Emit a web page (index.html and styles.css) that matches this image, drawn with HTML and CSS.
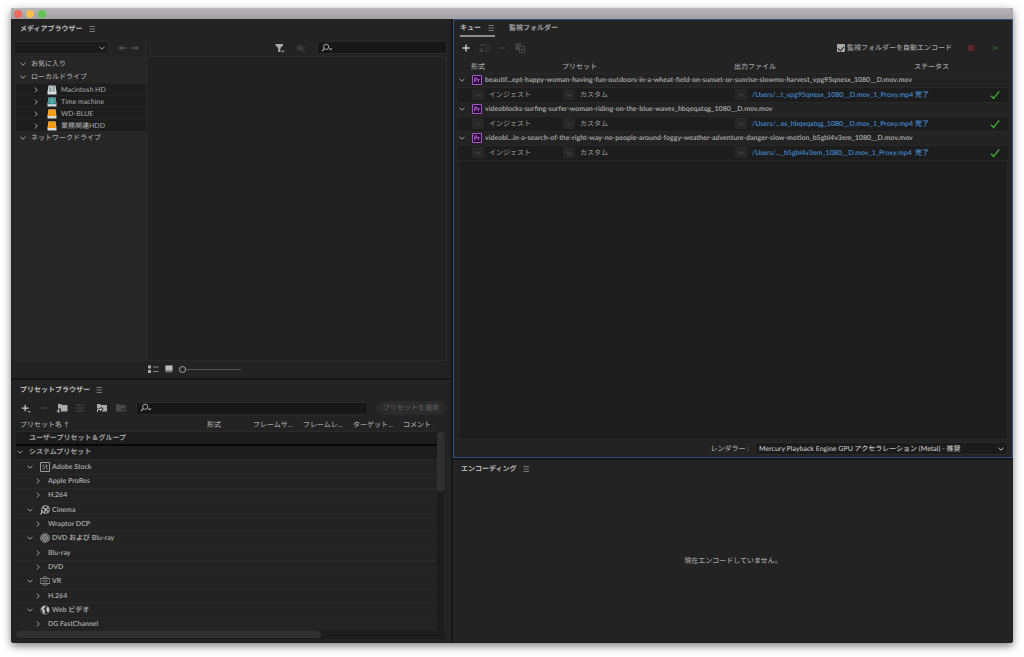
FILE: index.html
```html
<!DOCTYPE html>
<html lang="ja">
<head>
<meta charset="utf-8">
<title>Media Encoder</title>
<link rel="stylesheet" href="styles.css">
</head>
<body>
<svg class="defs" aria-hidden="true">
  <symbol id="down" viewBox="0 0 8 8"><path d="M1.5 2.8 4 5.2 6.5 2.8" fill="none" stroke="currentColor"/></symbol>
  <symbol id="right" viewBox="0 0 8 8"><path d="M2.8 1.5 5.2 4 2.8 6.5" fill="none" stroke="currentColor"/></symbol>
  <symbol id="menu" viewBox="0 0 8 8"><path d="M1.500 1.500h5.500M1.500 4h5.500M1.500 6.500h5.500" stroke="#8c8c8c" stroke-width=".8"/></symbol>
  <symbol id="search" viewBox="0 0 12 10"><circle cx="5.2" cy="3.8" r="2.6" fill="none" stroke="currentColor"/><path d="M3.3 5.7 1 8" stroke="currentColor" stroke-width="1.1"/><path d="M7.6 5.6h4L9.6 7.6z" fill="currentColor"/></symbol>
  <symbol id="plus" viewBox="0 0 10 10"><path d="M5 1.5v7M1.5 5h7" stroke="currentColor" stroke-width="1.4"/></symbol>
  <symbol id="minus" viewBox="0 0 10 10"><path d="M1.5 5h7" stroke="currentColor" stroke-width="1.2"/></symbol>
  <symbol id="disk" viewBox="0 0 10 10"><path d="M1.500.5h7L9.500 7v2.500h-9V7z" fill="#d9dcdc"/></symbol>
  <symbol id="disk-orange" viewBox="0 0 10 10"><path d="M1.500.5h7L9.500 7v2.500h-9V7z" fill="#d9dcdc"/><path d="M1.500.5h7l.5 6.500H1z" fill="#f39c12"/></symbol>
  <symbol id="pr" viewBox="0 0 10 10"><path d="M.5.5h9v9h-9z" fill="#2a0634" stroke="#a259c4"/><path d="M2.8 7.4V2.8h1.1c1.8 0 1.8 2.4 0 2.4H2.8M6.3 7.4V4.2M6.3 5.4c.2-.8.8-1.1 1.4-1" fill="none" stroke="#c07be0" stroke-width=".9"/></symbol>
  <symbol id="check" viewBox="0 0 10 10"><path d="M1 5.8 3.6 8.4 9.2 1.4" fill="none" stroke="#3fa535" stroke-width="1.5"/></symbol>
  <symbol id="sliders" viewBox="0 0 10 10"><path d="M.5 2h3m2 0h4M.5 5h5m2 0h2M.5 8h2m2 0h5M4.5 1v2M6.5 4v2M3.5 7v2" stroke="currentColor"/></symbol>
</svg>
<main class="window">
  <header class="titlebar"><i class="light close"></i><i class="light minimise"></i><i class="light zoom"></i></header>
  <div class="workspace">
    <div class="column">
      <section class="panel media">
        <h2 class="title">メディアブラウザー <button class="icon-button" aria-label="パネルメニュー"><svg class="i8"><use href="#menu"/></svg></button></h2>
        <div class="media-tools">
          <div class="location">
            <label class="drop"><select aria-label="場所"><option></option></select><svg class="i8"><use href="#down"/></svg></label>
            <button class="icon-button dim" aria-label="戻る"><svg class="i8" viewBox="0 0 8 8"><path d="M0 4l3.5-3v2H8v2H3.500v2z" fill="currentColor"/></svg></button>
            <button class="icon-button dim" aria-label="進む"><svg class="i8" viewBox="0 0 8 8"><path d="M8 4L4.500 1v2H0v2h4.500v2z" fill="currentColor"/></svg></button>
          </div>
          <div class="filters">
            <button class="icon-button" aria-label="フィルター"><svg class="i10" viewBox="0 0 10 10"><path d="M.5 1h7.5v1.500L5.400 5v4H3.200V5L.5 2.500zM6 7.800h3.500L7.800 9.600z" fill="#aaa"/></svg></button>
            <button class="icon-button dim" aria-label="表示"><svg class="i10" viewBox="0 0 10 10"><path d="M.5 5Q4.500 0 8.500 5 4.500 9.500.5 5z" fill="none" stroke="currentColor"/><circle cx="4.500" cy="4.900" r="1.500" fill="currentColor"/><path d="M6.800 8h3L8.300 9.700z" fill="currentColor"/></svg></button>
            <label class="search"><svg class="i12"><use href="#search"/></svg><input type="text" aria-label="メディアを検索"></label>
          </div>
        </div>
        <div class="media-body">
          <ul class="tree">
            <li class="folder"><svg class="i8"><use href="#down"/></svg>お気に入り</li>
            <li class="folder"><svg class="i8"><use href="#down"/></svg>ローカルドライブ</li>
            <li>
              <ul class="drives">
                <li><svg class="i8"><use href="#right"/></svg><svg class="i10" viewBox="0 0 10 10"><use href="#disk"/><path d="M2.200 1.200h5.600l.4 5.300H1.800z" fill="#8b999e"/><path d="M3.500 2h2v1.200h-2zM4 4.300h3v1H4z" fill="#e4eaec"/></svg>Macintosh HD</li>
                <li><svg class="i8"><use href="#right"/></svg><svg class="i10" viewBox="0 0 10 10"><use href="#disk"/><path d="M1.500.5h7l.5 6.700H1z" fill="#2f8a88"/><circle cx="5" cy="4" r="2" fill="none" stroke="#9ad4d0" stroke-width=".7"/><path d="M5 2.700V4l1 .7" fill="none" stroke="#9ad4d0" stroke-width=".6"/></svg>Time machine</li>
                <li><svg class="i8"><use href="#right"/></svg><svg class="i10"><use href="#disk-orange"/></svg>WD-BLUE</li>
                <li><svg class="i8"><use href="#right"/></svg><svg class="i10"><use href="#disk-orange"/></svg>業務関連HDD</li>
              </ul>
            </li>
            <li class="folder"><svg class="i8"><use href="#down"/></svg>ネットワークドライブ</li>
          </ul>
          <div class="contents"></div>
        </div>
        <div class="view-tools">
          <button class="icon-button" aria-label="リスト表示"><svg class="i12" viewBox="0 0 12 10"><path d="M1 1.500h3v3H1zM1 6h3v3H1z" fill="#aaa"/><path d="M6 3h5.500M6 7.500h5.500" stroke="#888"/></svg></button>
          <button class="icon-button" aria-label="サムネール表示"><svg class="i10" viewBox="0 0 10 10"><path d="M1.500 1.500h7v7h-7z" fill="#666"/><path d="M1.500 1.500h7v5h-7z" fill="#bbb"/></svg></button>
          <input class="slider" type="range" min="0" max="100" value="0" aria-label="サムネールサイズ">
        </div>
      </section>

      <section class="panel presets">
        <h2 class="title">プリセットブラウザー <button class="icon-button" aria-label="パネルメニュー"><svg class="i8"><use href="#menu"/></svg></button></h2>
        <div class="preset-tools">
          <div class="preset-actions">
            <button class="icon-button bright" aria-label="新規プリセット"><svg class="i12" viewBox="0 0 12 12"><path d="M5 2v8M1 6h8" stroke="currentColor" stroke-width="1.500"/><path d="M8 9.800h3.500L9.800 11.600z" fill="currentColor"/></svg></button>
            <button class="icon-button dim" aria-label="削除"><svg class="i10"><use href="#minus"/></svg></button>
            <button class="icon-button" aria-label="新規グループ"><svg class="i12" viewBox="0 0 12 10"><path d="M2 1h3l1 1h5.500v6.500H5V5.500H2z" fill="#aaa"/><path d="M2.500 6v4M.5 8h4" stroke="#aaa"/></svg></button>
            <button class="icon-button dim" aria-label="プリセット設定"><svg class="i10"><use href="#sliders"/></svg></button>
            <button class="icon-button wide" aria-label="読み込み"><svg class="i12" viewBox="0 0 12 10"><path d="M1 1h3l1 1h6v6.500H5.500L7.500 6 5 3.500 3.500 5.500H1z" fill="#aaa"/><path d="M1.500 9V6.500H5M4 4.500 6 6.200 4 8" fill="none" stroke="#bbb"/></svg></button>
            <button class="icon-button dim" aria-label="書き出し"><svg class="i12" viewBox="0 0 12 10"><path d="M1 1h3l1 1h5.500v3.500H6v3H1z" fill="currentColor"/><path d="M6.500 9V7.500h4M9 5.500l2 2-2 2" fill="none" stroke="currentColor"/></svg></button>
          </div>
          <label class="search"><svg class="i12"><use href="#search"/></svg><input type="text" aria-label="プリセットを検索"></label>
          <button class="apply" disabled>プリセットを適用</button>
        </div>
        <div class="preset-list">
          <table class="preset-table">
            <colgroup><col class="c-name"><col class="c-format"><col class="c-meta"><col class="c-meta"><col class="c-meta"><col class="c-comment"></colgroup>
            <thead><tr><th>プリセット名 ↑</th><th>形式</th><th>フレームサ...</th><th>フレームレ...</th><th>ターゲット...</th><th>コメント</th></tr></thead>
            <tbody>
              <tr class="user"><td colspan="6"><div class="node top"><span class="i8"></span>ユーザープリセット＆グループ</div></td></tr>
              <tr class="system"><td colspan="6"><div class="node top"><svg class="i8"><use href="#down"/></svg>システムプリセット</div></td></tr>
              <tr><td colspan="6"><div class="node group"><svg class="i8"><use href="#down"/></svg><svg class="i10" viewBox="0 0 10 10"><path d="M.5.5h9v9h-9z" fill="none" stroke="#999"/><path d="M4.600 3.200C3.500 2.400 2.200 3.300 3 4.200s1.800.7 1.500 1.900-1.500 1-2.100.6M6.500 2.500v3.800q0 .8 1 .7M5.600 4.200h2" fill="none" stroke="#aaa" stroke-width=".7"/></svg>Adobe Stock</div></td></tr>
              <tr><td colspan="6"><div class="node leaf"><svg class="i8"><use href="#right"/></svg>Apple ProRes</div></td></tr>
              <tr><td colspan="6"><div class="node leaf"><svg class="i8"><use href="#right"/></svg>H.264</div></td></tr>
              <tr><td colspan="6"><div class="node group"><svg class="i8"><use href="#down"/></svg><svg class="i10" viewBox="0 0 10 10"><circle cx="5.500" cy="4.500" r="3.900" fill="none" stroke="#bbb"/><path d="M.3 9.500Q2 8.500 2 5M5.500 4.500 3 2.500M5.500 4.500l2.800-2M5.500 4.500 4 8M5.500 4.500l3 2.200" fill="none" stroke="#bbb" stroke-width="1.200"/></svg>Cinema</div></td></tr>
              <tr><td colspan="6"><div class="node leaf"><svg class="i8"><use href="#right"/></svg>Wraptor DCP</div></td></tr>
              <tr><td colspan="6"><div class="node group"><svg class="i8"><use href="#down"/></svg><svg class="i10" viewBox="0 0 10 10"><circle cx="5" cy="5" r="4.300" fill="#4d4d4d" stroke="#999" stroke-width=".9"/><circle cx="5" cy="5" r="2.500" fill="none" stroke="#aaa" stroke-width=".9"/><circle cx="5" cy="5" r=".9" fill="#aaa"/></svg>DVD および Blu-ray</div></td></tr>
              <tr><td colspan="6"><div class="node leaf"><svg class="i8"><use href="#right"/></svg>Blu-ray</div></td></tr>
              <tr><td colspan="6"><div class="node leaf"><svg class="i8"><use href="#right"/></svg>DVD</div></td></tr>
              <tr><td colspan="6"><div class="node group"><svg class="i8"><use href="#down"/></svg><svg class="i10" viewBox="0 0 10 10"><path d="M.2 2.500h9.600v5H.2zM2 2.500Q5-1.500 8 2.500M2 7.500q3 4 6 0M2 5h2M6 5h2M5 3.500v3" fill="none" stroke="#999" stroke-width=".8"/></svg>VR</div></td></tr>
              <tr><td colspan="6"><div class="node leaf"><svg class="i8"><use href="#right"/></svg>H.264</div></td></tr>
              <tr><td colspan="6"><div class="node group"><svg class="i8"><use href="#down"/></svg><svg class="i10" viewBox="0 0 10 10"><circle cx="5" cy="5" r="4.300" fill="#2b2b2b" stroke="#999" stroke-width=".6"/><path d="M1 3.500 3.500.9l2 .4-.7 1.500L3.500 4l1.700 1.700-.9 3.300L3 8.500 2.500 6zM6.500 2.500 8.500 2l.8 3-.8 2.500-1.300-.8-.9-2z" fill="#c4c4c4"/></svg>Web ビデオ</div></td></tr>
              <tr><td colspan="6"><div class="node leaf"><svg class="i8"><use href="#right"/></svg>DG FastChannel</div></td></tr>
            </tbody>
          </table>
          <div class="vbar"><div class="vthumb"></div></div>
          <div class="hbar"><div class="hthumb"></div></div>
        </div>
      </section>
    </div>

    <div class="column">
      <section class="panel queue">
        <nav class="tabs">
          <button class="tab active">キュー <svg class="i8"><use href="#menu"/></svg></button>
          <button class="tab">監視フォルダー</button>
        </nav>
        <div class="queue-tools">
          <button class="icon-button bright" aria-label="ソースを追加"><svg class="i10"><use href="#plus"/></svg></button>
          <button class="icon-button dim" aria-label="出力を追加"><svg class="i10" viewBox="0 0 10 10"><path d="M1 2h3m1.500 0H7m1 0h2M4.500 1v2M5 5h1m1 0h3M6 8h4M2.500 5v4.500M.2 7.500h4.500" stroke="currentColor"/></svg></button>
          <button class="icon-button dim" aria-label="削除"><svg class="i10"><use href="#minus"/></svg></button>
          <button class="icon-button dim" aria-label="複製"><svg class="i10" viewBox="0 0 10 10"><path d="M.5.500h5.500v2H3.500v4.500h-3z" fill="currentColor"/><path d="M4.500 3.500h5v6h-5zM7 5v3M5.500 6.500h3" fill="none" stroke="currentColor"/></svg></button>
          <label class="auto"><input type="checkbox" checked>監視フォルダーを自動エンコード</label>
          <button class="icon-button stop" aria-label="停止"><svg class="i8" viewBox="0 0 8 8"><path d="M1 1h6v6H1z" fill="#5b2626"/></svg></button>
          <button class="icon-button" aria-label="開始"><svg class="i8" viewBox="0 0 8 8"><path d="M1 1l6 3-6 3z" fill="#28472a"/></svg></button>
        </div>
        <div class="queue-list">
          <table class="queue-table">
            <colgroup><col class="q-toggle"><col class="q-format"><col class="q-preset"><col class="q-output"><col class="q-status"></colgroup>
            <thead><tr><th></th><th>形式</th><th>プリセット</th><th>出力ファイル</th><th>ステータス</th></tr></thead>
            <tbody>
              <tr class="source"><td><svg class="i8"><use href="#down"/></svg></td><td colspan="4"><div class="cell"><svg class="i10"><use href="#pr"/></svg>beautif...ept-happy-woman-having-fun-outdoors-in-a-wheat-field-on-sunset-or-sunrise-slowmo-harvest_vpg95qnesx_1080__D.mov.mov</div></td></tr>
              <tr class="job"><td></td><td><div class="cell"><button class="pick" aria-label="形式を選択"><svg class="i8"><use href="#down"/></svg></button>インジェスト</div></td><td><div class="cell"><button class="pick" aria-label="プリセットを選択"><svg class="i8"><use href="#down"/></svg></button>カスタム</div></td><td><div class="cell"><button class="pick" aria-label="出力先を選択"><svg class="i8"><use href="#down"/></svg></button><a href="#">/Users/...t_vpg95qnesx_1080__D.mov_1_Proxy.mp4</a></div></td><td><div class="cell done"><a href="#">完了</a><svg class="i10"><use href="#check"/></svg></div></td></tr>
              <tr class="source"><td><svg class="i8"><use href="#down"/></svg></td><td colspan="4"><div class="cell"><svg class="i10"><use href="#pr"/></svg>videoblocks-surfing-surfer-woman-riding-on-the-blue-waves_hbqeqatqg_1080__D.mov.mov</div></td></tr>
              <tr class="job"><td></td><td><div class="cell"><button class="pick" aria-label="形式を選択"><svg class="i8"><use href="#down"/></svg></button>インジェスト</div></td><td><div class="cell"><button class="pick" aria-label="プリセットを選択"><svg class="i8"><use href="#down"/></svg></button>カスタム</div></td><td><div class="cell"><button class="pick" aria-label="出力先を選択"><svg class="i8"><use href="#down"/></svg></button><a href="#">/Users/...es_hbqeqatqg_1080__D.mov_1_Proxy.mp4</a></div></td><td><div class="cell done"><a href="#">完了</a><svg class="i10"><use href="#check"/></svg></div></td></tr>
              <tr class="source"><td><svg class="i8"><use href="#down"/></svg></td><td colspan="4"><div class="cell"><svg class="i10"><use href="#pr"/></svg>videobl...in-a-search-of-the-right-way-no-people-around-foggy-weather-adventure-danger-slow-motion_b5gbl4v3em_1080__D.mov.mov</div></td></tr>
              <tr class="job"><td></td><td><div class="cell"><button class="pick" aria-label="形式を選択"><svg class="i8"><use href="#down"/></svg></button>インジェスト</div></td><td><div class="cell"><button class="pick" aria-label="プリセットを選択"><svg class="i8"><use href="#down"/></svg></button>カスタム</div></td><td><div class="cell"><button class="pick" aria-label="出力先を選択"><svg class="i8"><use href="#down"/></svg></button><a href="#">/Users/..._b5gbl4v3em_1080__D.mov_1_Proxy.mp4</a></div></td><td><div class="cell done"><a href="#">完了</a><svg class="i10"><use href="#check"/></svg></div></td></tr>
            </tbody>
          </table>
          <div class="queue-empty"></div>
        </div>
        <div class="renderer">
          <label for="renderer">レンダラー :</label>
          <div class="drop engine"><select id="renderer"><option>Mercury Playback Engine GPU アクセラレーション (Metal) - 推奨</option></select><svg class="i8"><use href="#down"/></svg></div>
        </div>
      </section>
      <section class="panel encoding">
        <h2 class="title">エンコーディング <button class="icon-button" aria-label="パネルメニュー"><svg class="i8"><use href="#menu"/></svg></button></h2>
        <p class="idle">現在エンコードしていません。</p>
      </section>
    </div>
  </div>
</main>
</body>
</html>
```
FILE: styles.css
```css
* { box-sizing: border-box; }

body {
  margin: 0;
  background: #fff;
  color: #a0a0a0;
  font: 500 7px/12px Lato, "Noto Sans CJK JP", sans-serif;
  text-rendering: geometricPrecision;
}

button, input, select { font: inherit; color: inherit; margin: 0; padding: 0; border: 0; background: none; text-rendering: inherit; }
ul { list-style: none; margin: 0; padding: 0; }
a { color: #4691dc; text-decoration: none; }
svg { flex: none; display: block; }

.defs { position: absolute; width: 0; height: 0; }
.i8 { width: 8px; height: 8px; }
.i10 { width: 10px; height: 10px; }
.i12 { width: 12px; height: 10px; }

.window {
  display: flex;
  flex-direction: column;
  height: calc(100vh - 22px);
  min-height: 600px;
  margin: 8px 11px 14px;
  border-radius: 3px;
  overflow: hidden;
  background: #171717;
  box-shadow: 0 3px 8px rgba(0, 0, 0, .5);
}

.titlebar {
  display: flex;
  align-items: center;
  gap: 4px;
  height: 11px;
  padding-left: 3px;
  background: linear-gradient(#b8b6b9, #a19fa2);
}
.light { width: 8px; height: 8px; border-radius: 50%; }
.close { background: #ee6a5e; }
.minimise { background: #f5bf4f; }
.zoom { background: #61c554; }

.workspace { flex: 1; display: grid; grid-template-columns: 440fr 560fr; gap: 2px; min-height: 0; }
.column { display: flex; flex-direction: column; gap: 2px; min-width: 0; min-height: 0; }
.panel { display: flex; flex-direction: column; background: #232323; min-width: 0; }

.title { display: flex; align-items: center; gap: 5px; margin: 0; padding: 4px 9px; font-size: 7px; font-weight: 700; color: #bcbcbc; }
.icon-button { display: flex; align-items: center; justify-content: center; color: #8c8c8c; }
.bright { color: #ccc; }
.dim { color: #484848; }

.drop { display: flex; align-items: center; flex: 1; height: 13px; padding-right: 2px; background: #1b1b1b; border: 1px solid #2a2a2a; border-radius: 2px; }
.drop select { flex: 1; min-width: 0; appearance: none; }
.search { flex: 1; display: flex; align-items: center; height: 13px; padding-left: 3px; background: #171717; border: 1px solid #292929; border-radius: 2px; color: #aaa; }
.search input { flex: 1; min-width: 0; height: 11px; }

/* media browser */
.media { flex: 358; padding-bottom: 1px; }
.media-tools { display: grid; grid-template-columns: 132px 1fr; height: 17px; padding: 0 4px 0 3px; align-items: center; }
.location { display: flex; gap: 5px; align-items: center; height: 15px; padding-right: 6px; border-right: 1px solid #2a2a2a; }
.location .drop { margin-right: 4px; }
.filters { display: flex; justify-content: flex-end; align-items: center; gap: 11px; }
.filters .search { flex: 0 0 130px; }
.media-body { flex: 1; display: grid; grid-template-columns: 130px 1fr; margin: 0 4px; border: 1px solid #292929; }
.tree { background: #262626; }
.tree .folder { display: flex; align-items: center; gap: 4px; height: 13px; padding-left: 3px; }
.drives { background: #1d1d1d; }
.drives li { display: flex; align-items: center; height: 12px; padding-left: 16px; border-top: 1px solid #232323; }
.drives .i10 { margin: 0 4px 0 7px; }
.contents { background: #212121; border-left: 1px solid #292929; }
.view-tools { display: flex; align-items: center; gap: 5px; height: 16px; padding-left: 136px; }
.slider { width: 62px; height: 8px; appearance: none; background: linear-gradient(#555, #555) center / 100% 1px no-repeat; }
.slider::-webkit-slider-thumb { appearance: none; width: 7px; height: 7px; border: 1px solid #aaa; border-radius: 50%; background: #232323; }

/* preset browser */
.presets { flex: 259; padding-bottom: 4px; }
.preset-tools { display: flex; align-items: center; height: 16px; padding: 0 5px 0 9px; gap: 8px; }
.preset-actions { display: flex; align-items: center; gap: 7px; width: 108px; }
.preset-actions .wide { margin-left: 4px; }
.apply { height: 14px; width: 70px; border-radius: 7px; background: #2b2b2b; color: #585858; }
.preset-list { flex: 1; display: grid; grid-template-columns: 1fr 8px; grid-template-rows: 1fr 8px; margin: 0 6px 0 5px; }
table { width: 100%; border-collapse: collapse; table-layout: fixed; }
th, td { padding: 0; text-align: left; white-space: nowrap; }
th { font-weight: 500; }
.preset-table { align-self: start; }
.preset-table th { height: 15px; padding-left: 4px; vertical-align: bottom; }
.c-name { width: 187px; }
.c-format { width: 46px; }
.c-meta { width: 50px; }
.preset-table td { height: 14px; border-top: 1px solid #292929; overflow: hidden; }
.preset-table tr:nth-child(3n) td { height: 15px; }
.preset-table .user td { background: #1d1d1d; }
.preset-table .system td { border-top: 2px solid #080808; background: #1d1d1d; }
.node { display: flex; align-items: center; height: 12px; gap: 5px; font-weight: 700; }
.group { padding-left: 10px; gap: 6px; }
.group .i10 { margin-right: -4px; }
.leaf { padding-left: 18px; gap: 6px; }
.vbar { margin-top: 16px; background: #1c1c1c; border-right: 1px solid #292929; }
.vthumb { width: 7px; height: 30%; border-radius: 3px; background: #303030; }
.hbar { grid-column: 1 / 3; background: #1c1c1c; }
.hthumb { width: 71%; height: 7px; border-radius: 3px; background: #303030; }

/* queue */
.queue { flex: 437; padding: 0 4px; border: 1px solid #2d5286; }
.tabs { display: flex; gap: 14px; padding: 1px 2px 0; }
.tab { display: flex; align-items: center; gap: 6px; height: 16px; padding: 0; font-weight: 700; border-bottom: 2px solid transparent; }
.active { color: #bcbcbc; border-color: #8c8c8c; }
.queue-tools { display: flex; align-items: center; gap: 8px; height: 22px; padding: 0 8px 0 3px; }
.auto { display: flex; align-items: center; gap: 2px; margin-left: auto; }
.stop { margin: 0 9px 0 7px; }
.auto input { appearance: none; width: 8px; height: 8px; border-radius: 1px; background: #aaa; }
.auto input:checked::before { content: ""; display: block; width: 5px; height: 3px; margin: 2px 1px; border: solid #222; border-width: 0 0 1px 1px; transform: rotate(-45deg); }
.queue-list { flex: 1; display: flex; flex-direction: column; }
.q-toggle { width: 12px; }
.q-format { width: 91px; }
.q-preset { width: 172px; }
.q-output { width: 180px; }
.queue-table th { height: 14px; padding-left: 1px; vertical-align: bottom; }
.queue-table td { height: 14px; padding-left: 2px; border-top: 1px solid #282828; }
.queue-table td:first-child { padding-left: 0; }
.job td { height: 15px; background: #1d1d1d; }
.source { font-weight: 700; }
.source .cell { gap: 3px; }
.cell { display: flex; align-items: center; gap: 5px; height: 13px; }
.job .cell { color: #858585; }
.pick { flex: none; display: flex; align-items: center; justify-content: center; width: 12px; height: 11px; border-radius: 1px; background: #282828; color: #484848; }
.done { justify-content: space-between; padding-right: 8px; }
.queue-empty { flex: 1; border: 1px solid #282828; background: #1d1d1d; }
.renderer { display: flex; justify-content: flex-end; align-items: center; gap: 6px; height: 17px; }
.engine { flex: 0 0 253px; padding-left: 3px; color: #c4c4c4; }

/* encoding */
.encoding { flex: 183; }
.encoding .title { padding-top: 3px; padding-left: 8px; }
.idle { flex: 1; display: flex; align-items: center; justify-content: center; margin: 0; }
```
